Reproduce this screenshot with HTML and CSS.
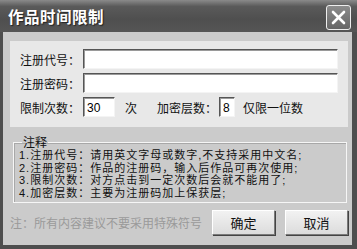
FILE: index.html
```html
<!DOCTYPE html>
<html lang="zh-CN">
<head>
  <meta charset="UTF-8">
  <title>作品时间限制</title>
  <link rel="stylesheet" href="styles.css">
</head>
<body>
<div class="window">
  <div class="titlebar">
    <span class="title">作品时间限制</span>
    <button class="close">
      <svg width="15" height="15" viewBox="0 0 15 15"><path d="M2 2 L13 13 M13 2 L2 13" stroke="#fff" stroke-width="2.6" stroke-linecap="round"/></svg>
    </button>
  </div>
  <div class="body">
    <div class="panel">
      <div class="row">
        <label>注册代号：</label>
        <input type="text" class="wide">
      </div>
      <div class="row">
        <label>注册密码：</label>
        <input type="text" class="wide">
      </div>
      <div class="row">
        <label>限制次数：</label>
        <input type="text" class="count" value="30">
        <span class="unit">次</span>
        <label class="layers">加密层数：</label>
        <input type="text" class="digit" value="8">
        <span class="hint">仅限一位数</span>
      </div>
    </div>
    <fieldset class="notes">
      <legend>注释</legend>
      <div>1.注册代号：请用英文字母或数字,不支持采用中文名;</div>
      <div>2.注册密码：作品的注册码，输入后作品可再次使用;</div>
      <div>3.限制次数：对方点击到一定次数后会就不能用了;</div>
      <div>4.加密层数：主要为注册码加上保获层;</div>
    </fieldset>
    <div class="footer">
      <span class="tip">注：所有内容建议不要采用特殊符号</span>
      <button class="btn">确定</button>
      <button class="btn">取消</button>
    </div>
  </div>
</div>
</body>
</html>
```
FILE: styles.css
```css
body { margin:0; font-family:"Noto Sans CJK SC", "Noto Sans", sans-serif; background:#4e4e4e; }
.window { width:357px; height:249px; background:#4e4e4e; display:flex; flex-direction:column; box-sizing:border-box; padding:0 5px 4px 3px; }
.titlebar { height:32px; margin:0 -5px 0 -3px; padding:0 6px 0 8px; display:flex; align-items:center; justify-content:space-between; background:linear-gradient(#8a8a8a, #5a5a5a 20%, #4f4f4f 60%, #555); }
.title { color:#fff; font-size:15.5px; font-weight:bold; letter-spacing:0.5px; text-shadow:1px 1px 1px #222; }
.close { width:25px; height:25px; margin-top:2px; padding:0; border:1px solid #eee; border-radius:3px; background:linear-gradient(#8c8c8c, #666); display:flex; align-items:center; justify-content:center; }
.body { flex:1; background:#cbcbcb; padding:9px 4px 0 7px; display:flex; flex-direction:column; }
.panel { background:#e8e8e8; padding:8px 10px 10px 10px; display:flex; flex-direction:column; gap:4px; }
.row { display:flex; align-items:center; height:20px; font-size:12px; color:#111; }
.row label { width:60px; margin-right:3px; white-space:nowrap; }
.row input { height:20px; box-sizing:border-box; border:1px solid; border-color:#555 #f4f4f4 #f4f4f4 #555; box-shadow:inset 1px 1px 0 #9a9a9a; background:#fff; font:12px "Liberation Sans", sans-serif; padding:2px 2px 0 3px; outline:none; }
.wide { flex:1; }
.count { width:32px; }
.unit { margin-left:10px; }
.row .layers { margin-left:20px; margin-right:2px; }
.digit { width:16px; }
.hint { margin-left:8px; }
.notes { margin:9px 1px 0 3px; padding:1px 0 2px 5px; border:1px solid #f6f6f6; box-shadow:inset 1px 1px 0 #a8a8a8; font-family:"Liberation Sans", "Noto Sans CJK SC", sans-serif; font-size:11px; line-height:12.7px; letter-spacing:1px; color:#111; height:67px; box-sizing:border-box; }
.notes legend { font-family:"Noto Sans CJK SC", sans-serif; font-size:12px; line-height:12px; padding:0 1px; margin-left:3px; color:#111; letter-spacing:0; }
.footer { display:flex; align-items:center; margin-top:7px; }
.tip { flex:1; font-size:12px; color:#9a9a9a; margin-left:0; }
.btn { width:63px; height:25px; margin-left:10px; font-family:"Noto Sans CJK SC", sans-serif; font-size:13px; color:#111; background:linear-gradient(#f2f2f2, #dcdcdc); border:1px solid; border-color:#fff #7a7a7a #7a7a7a #fff; box-shadow:1px 1px 0 #444; padding:0; }
```
